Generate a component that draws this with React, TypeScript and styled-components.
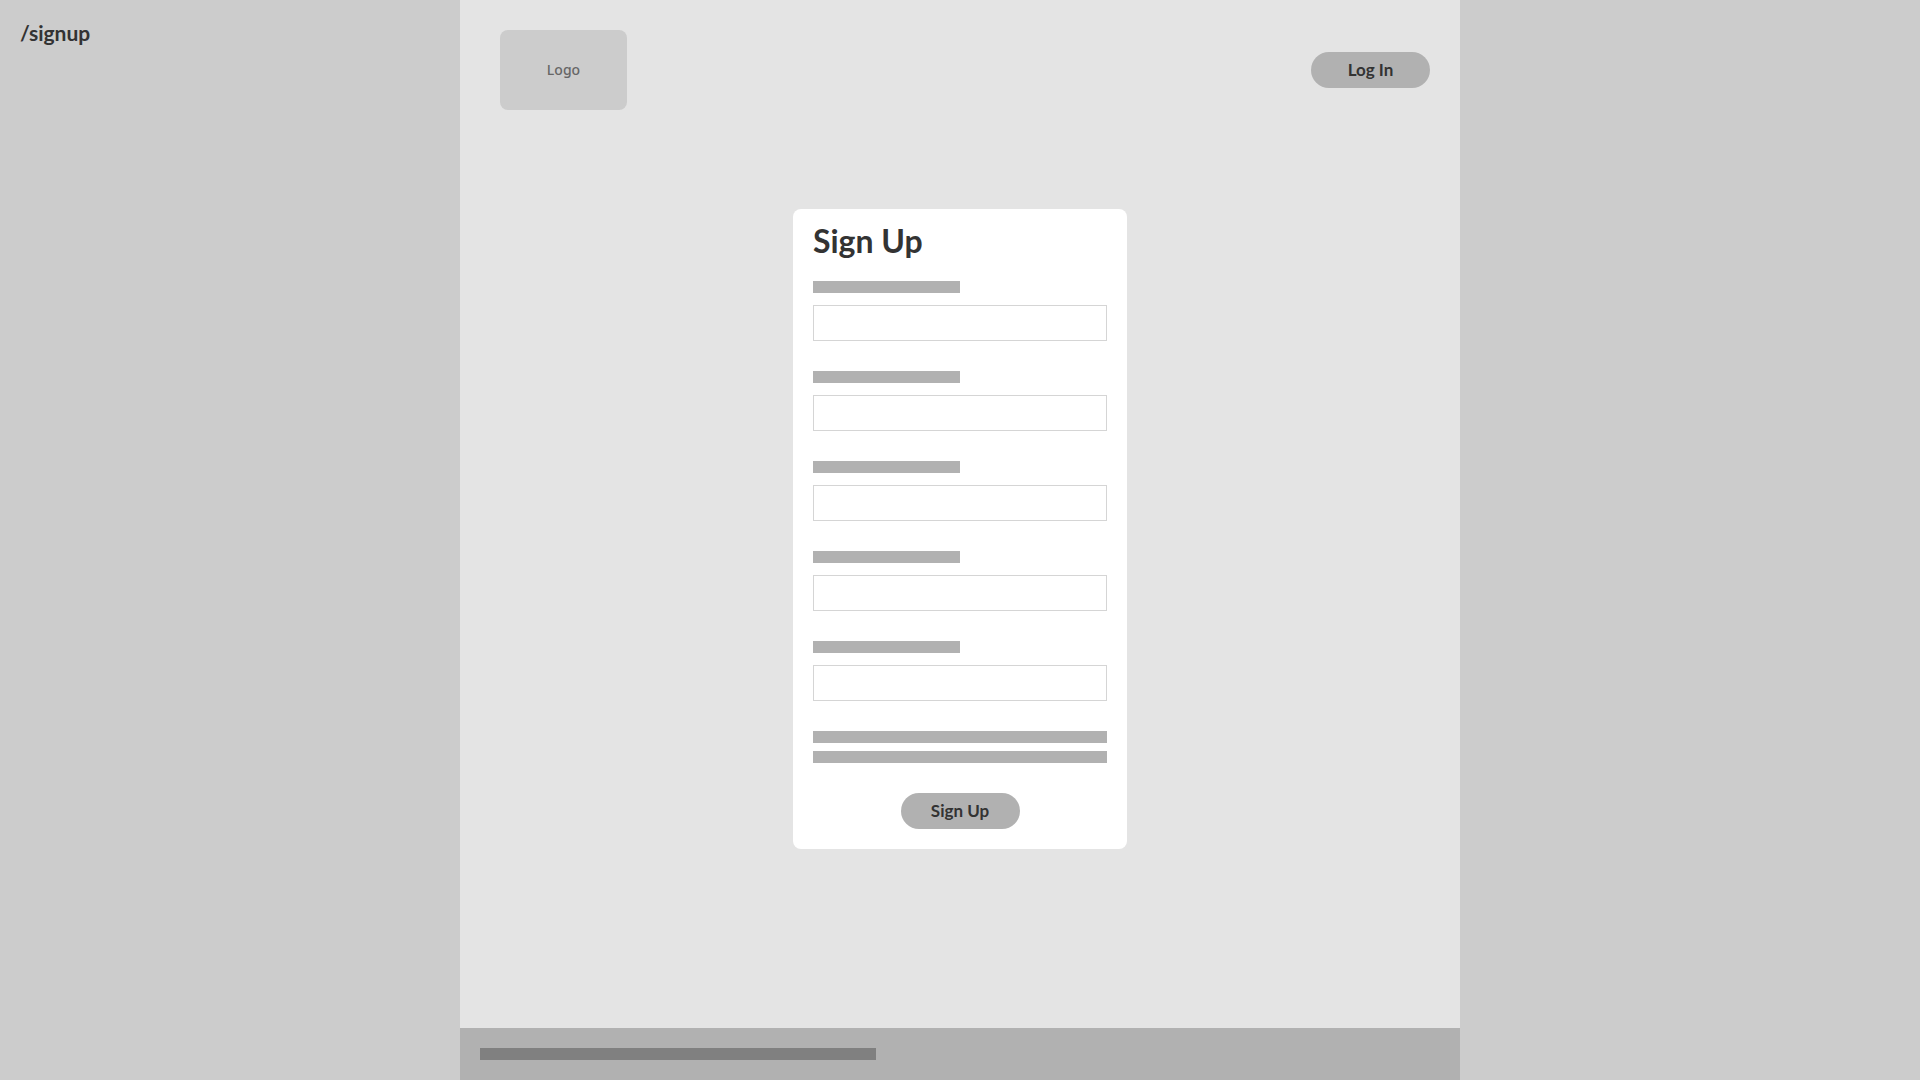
import React from "react";
import styled, { createGlobalStyle } from "styled-components";

const GlobalStyle = createGlobalStyle`
  * { box-sizing: border-box; }
  body {
    margin: 0;
    background: #cccccc;
    color: #333333;
    font-family: Lato, "Open Sans", sans-serif;
  }
`;

const Layout = styled.div`
  display: grid;
  grid-template-columns: 1fr minmax(0, 1000px) 1fr;
  min-height: 100vh;
`;

const Route = styled.div`
  padding: 20px;
  font-size: 21px;
  line-height: 26px;
  font-weight: 700;
`;

const Page = styled.div`
  display: flex;
  flex-direction: column;
  background: #e4e4e4;
`;

const Header = styled.header`
  display: flex;
  align-items: center;
  justify-content: space-between;
  padding: 30px 30px 30px 40px;
`;

const Logo = styled.div`
  display: grid;
  place-items: center;
  width: 127px;
  height: 80px;
  border-radius: 8px;
  background: #cccccc;
  color: #666666;
  font: 500 14px/20px "Noto Sans", sans-serif;
`;

const Button = styled.button`
  width: 119px;
  height: 36px;
  padding: 0;
  border: 0;
  border-radius: 18px;
  background: #b1b1b1;
  color: #333333;
  font: 700 17px/20px Lato, sans-serif;
  cursor: pointer;
`;

const Main = styled.main`
  flex: 1;
  display: flex;
  flex-direction: column;
  align-items: center;
  padding: 69px 20px;
`;

const Card = styled.form`
  display: flex;
  flex-direction: column;
  gap: 30px;
  width: 100%;
  max-width: 334px;
  padding: 12px 20px 20px;
  border-radius: 8px;
  background: #ffffff;
`;

const Title = styled.h1`
  margin: 0 0 -10px;
  font-size: 32px;
  line-height: 40px;
  font-weight: 700;
`;

const Field = styled.div`
  display: flex;
  flex-direction: column;
  gap: 12px;
`;

const FieldLabel = styled.label`
  width: 50%;
  height: 12px;
  background: #b1b1b1;
`;

const Input = styled.input`
  width: 100%;
  height: 36px;
  padding: 0 10px;
  border: 1px solid #d5d5d5;
  background: #ffffff;
  font: 400 16px/20px Lato, sans-serif;
`;

const Terms = styled.div`
  display: flex;
  flex-direction: column;
  gap: 8px;
`;

const TextBar = styled.div`
  height: 12px;
  background: #b1b1b1;
`;

const Actions = styled.div`
  display: flex;
  justify-content: center;
`;

const Footer = styled.footer`
  padding: 20px;
  background: #b1b1b1;
`;

const FooterBar = styled.div`
  width: 396px;
  max-width: 100%;
  height: 12px;
  background: #808080;
`;

const fields = ["field-1", "field-2", "field-3", "field-4", "field-5"];

export default function App() {
  return (
    <>
      <GlobalStyle />
      <Layout>
        <Route>/signup</Route>
        <Page>
          <Header>
            <Logo>Logo</Logo>
            <Button type="button">Log In</Button>
          </Header>
          <Main>
            <Card onSubmit={(e) => e.preventDefault()}>
              <Title>Sign Up</Title>
              {fields.map((id) => (
                <Field key={id}>
                  <FieldLabel htmlFor={id} />
                  <Input id={id} type="text" />
                </Field>
              ))}
              <Terms>
                <TextBar />
                <TextBar />
              </Terms>
              <Actions>
                <Button type="submit">Sign Up</Button>
              </Actions>
            </Card>
          </Main>
          <Footer>
            <FooterBar />
          </Footer>
        </Page>
      </Layout>
    </>
  );
}
